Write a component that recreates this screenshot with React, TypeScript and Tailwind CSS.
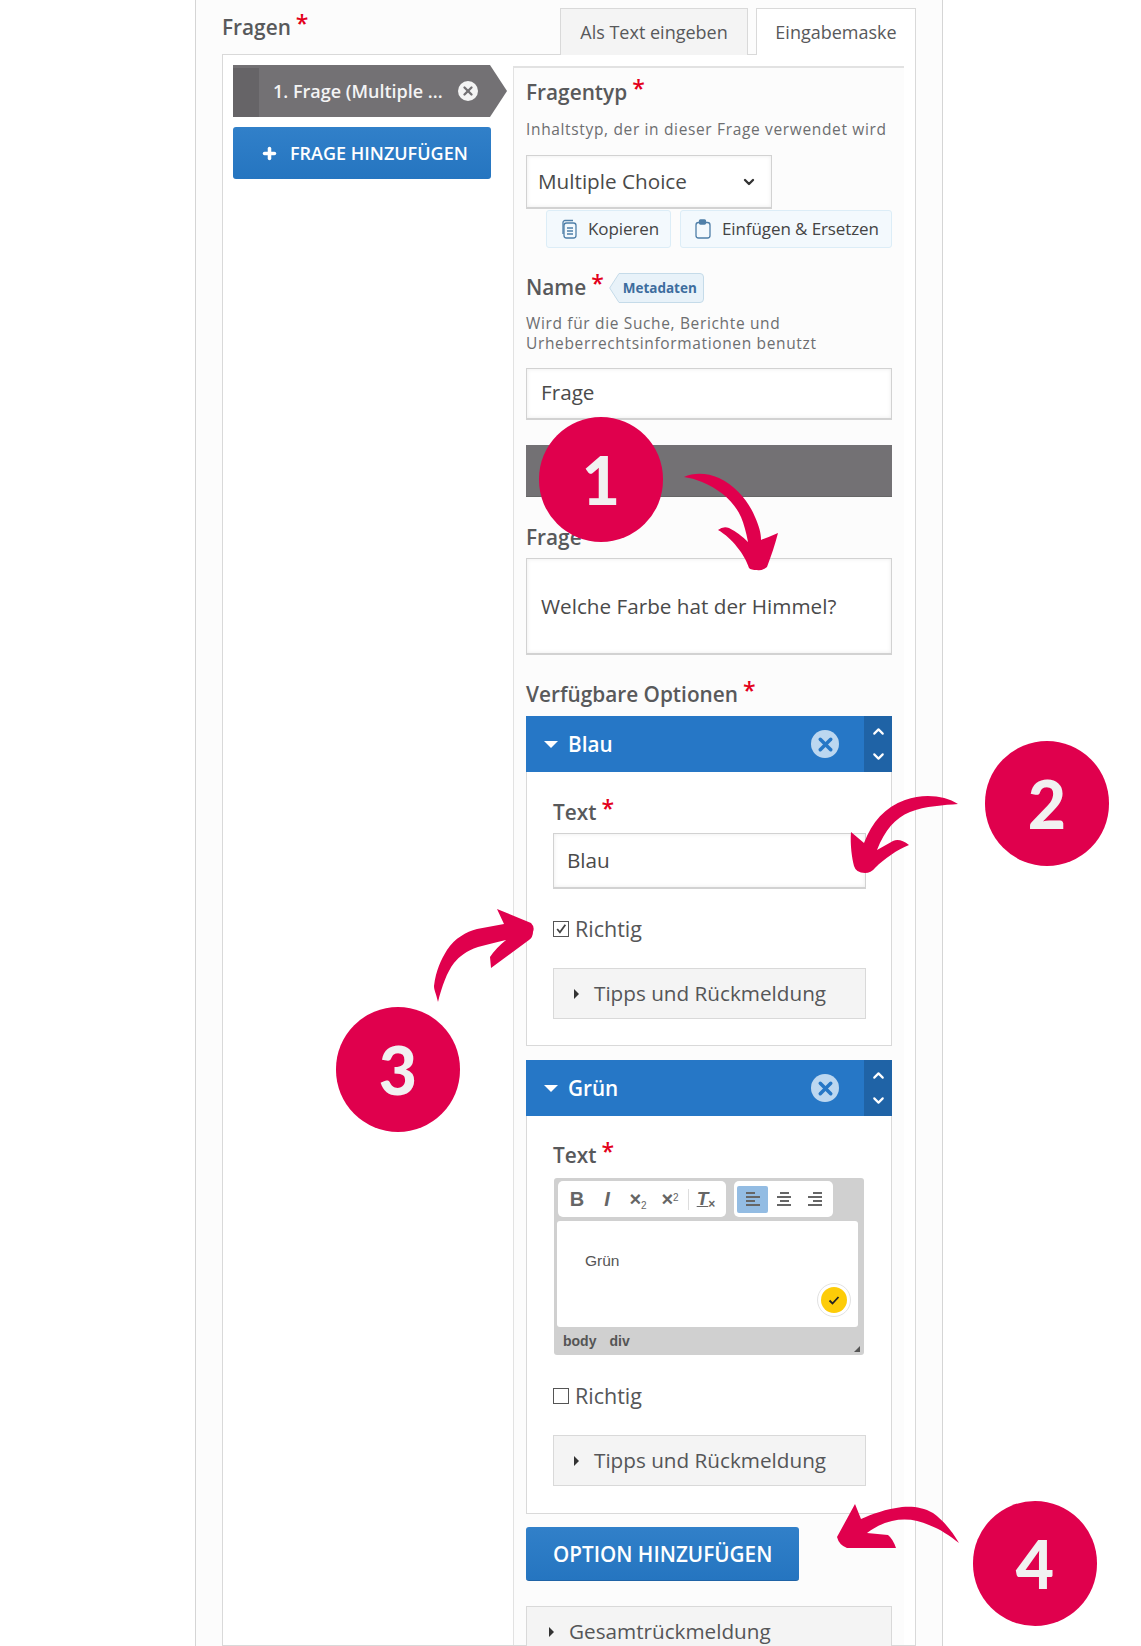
import type { ReactNode } from 'react';
import { ChevronDown, ChevronUp, Plus, X } from 'lucide-react';

function Label({ children, className = '' }: { children: ReactNode; className?: string }) {
  return (
    <div className={`flex h-[30px] items-center text-[20.8px] font-semibold text-[#58595b] ${className}`}>
      <span>{children}</span>
      <span className="relative -top-[5px] ml-[5px] text-[23px] font-semibold leading-none text-[#e3001b]">*</span>
    </div>
  );
}

function CollapsedBox({ title, className = '' }: { title: string; className?: string }) {
  return (
    <div className={`flex items-center border border-[#d9d9d9] bg-[#f4f4f4] text-[20.7px] text-[#555658] ${className}`}>
      <span className="mr-[15px] h-0 w-0 border-y-[5px] border-l-[5px] border-y-transparent border-l-[#333]" />
      {title}
    </div>
  );
}

function OptionHeader({ title }: { title: string }) {
  return (
    <div className="flex h-[56px] items-center bg-[#2677c6]">
      <span className="ml-[18px] h-0 w-0 border-x-[7px] border-t-[7px] border-x-transparent border-t-white" />
      <span className="ml-[10px] flex-1 pt-[2px] text-[20.7px] font-semibold text-white">{title}</span>
      <span className="mr-[25px] flex h-[28px] w-[28px] items-center justify-center rounded-full bg-[#bcd7f0]">
        <X size={21} strokeWidth={4} className="text-[#2677c6]" />
      </span>
      <div className="flex h-full w-[28px] flex-col items-center justify-center gap-[8px] bg-[#1f63a6]">
        <ChevronUp size={17} strokeWidth={3} className="text-white" />
        <ChevronDown size={17} strokeWidth={3} className="text-white" />
      </div>
    </div>
  );
}

function Richtig({ checked, className = '' }: { checked: boolean; className?: string }) {
  return (
    <div className={`flex h-[24px] items-center text-[21.5px] text-[#555658] ${className}`}>
      <span className="flex h-[16px] w-[16px] items-center justify-center border border-[#555] bg-white">
        {checked && (
          <svg width="12" height="12" viewBox="0 0 11 11" fill="none" stroke="#444" strokeWidth="1.6">
            <path d="M2 5.5l2.5 3L9.5 1.5" />
          </svg>
        )}
      </span>
      <span className="ml-[6px]">Richtig</span>
    </div>
  );
}

function AlignIcon({ kind }: { kind: 'left' | 'center' | 'right' }) {
  const short = kind === 'left' ? 'M1 2h9M1 10h9' : kind === 'center' ? 'M4 2h9M4 10h9' : 'M6 2h9M6 10h9';
  return (
    <svg width="16" height="16" viewBox="0 0 16 16" fill="none" stroke="#666" strokeWidth="2">
      <path d={`${short}M1 6h14M1 14h14`} />
    </svg>
  );
}

function Toolbar() {
  return (
    <div className="ml-px flex gap-[8px]">
      <div className="flex h-[36px] w-[168px] items-center rounded-[5px] bg-white pl-[4px] font-['Liberation_Sans',sans-serif] text-[#666]">
        <span className="w-[30px] text-center text-[20px] font-bold">B</span>
        <span className="w-[30px] text-center text-[20px] font-bold italic">I</span>
        <span className="w-[32px] text-center text-[20px] font-bold">
          ×<sub className="text-[10px] font-normal">2</sub>
        </span>
        <span className="w-[32px] text-center text-[20px] font-bold">
          ×<sup className="text-[10px] font-normal">2</sup>
        </span>
        <span className="ml-[2px] mr-[2px] h-[21px] w-px bg-[#ddd]" />
        <span className="w-[30px] text-center text-[19px] font-bold italic">
          <span className="underline">T</span>
          <sub className="text-[12px] not-italic">×</sub>
        </span>
      </div>
      <div className="flex h-[36px] w-[99px] items-center rounded-[5px] bg-white pl-[3px]">
        <span className="flex h-[27px] w-[31px] items-center justify-center rounded-[2px] bg-[#93bce3]">
          <AlignIcon kind="left" />
        </span>
        <span className="flex w-[31px] justify-center">
          <AlignIcon kind="center" />
        </span>
        <span className="flex w-[31px] justify-center">
          <AlignIcon kind="right" />
        </span>
      </div>
    </div>
  );
}

function Badge({ n, className }: { n: string; className: string }) {
  return (
    <div className={`absolute flex h-[125px] w-[124px] items-center justify-center rounded-full bg-[#e0004d] font-['Lato',sans-serif] text-[66px] font-black leading-none text-[#f1f1f1] ${className}`}>
      {n}
    </div>
  );
}

const inputClass =
  'flex items-center border border-b-2 border-[#d2d2d2] bg-white text-[20.7px] text-[#4a4a4a] shadow-[inset_0_0_4px_#ececec]';

export default function App() {
  return (
    <div className="relative h-[1646px] w-[1141px] overflow-hidden bg-white font-['Open_Sans',sans-serif]">
      <div className="ml-[195px] h-full w-[748px] border-x border-[#d5d5d5] bg-[#fcfcfc] px-[26px]">
        {/* Header with tabs */}
        <div className="flex h-[54px] justify-between">
          <div className="flex h-[54px] items-start pt-[13px]">
            <Label>Fragen</Label>
          </div>
          <div className="flex items-start gap-[8px] pt-[8px]">
            <div className="flex h-[47px] w-[188px] items-center justify-center border border-b-0 border-[#d9d9d9] bg-[#f4f4f4] text-[18px] text-[#58595b]">
              Als Text eingeben
            </div>
            <div className="relative z-10 flex h-[47px] w-[160px] items-center justify-center border border-b-0 border-[#d9d9d9] bg-white text-[18px] text-[#58595b]">
              Eingabemaske
            </div>
          </div>
        </div>

        {/* Panel */}
        <div className="flex h-[1592px] w-[694px] gap-[6px] border border-[#d9d9d9] bg-white pl-[10px]">
          <div className="w-[274px] pt-[10px]">
            <div className="flex h-[52px] items-center bg-[#737174] [clip-path:polygon(0_0,257px_0,274px_50%,257px_100%,0_100%)]">
              <span className="mt-[3px] h-[49px] w-[26px] bg-[#666467]" />
              <span className="ml-[14px] w-[175px] whitespace-nowrap text-[18px] font-semibold text-[#f4f4f4]">
                1. Frage (Multiple ...
              </span>
              <span className="ml-[10px] flex h-[20px] w-[20px] items-center justify-center rounded-full bg-[#f4f4f4]">
                <X size={14} strokeWidth={4} className="text-[#737174]" />
              </span>
            </div>
            <button className="mt-[10px] flex h-[52px] w-[258px] items-center rounded-[3px] bg-gradient-to-b from-[#3180c9] to-[#2575c0] pl-[28px] text-[18px] font-semibold text-white">
              <Plus size={17} strokeWidth={5} />
              <span className="ml-[12px]">FRAGE HINZUFÜGEN</span>
            </button>
          </div>

          <div className="mt-[11px] w-[391px] border-l border-t-2 border-[#e2e2e2] bg-[#fcfcfc] pl-[12px]">
            <div className="w-[366px]">
              <Label className="mt-[10px]">Fragentyp</Label>
              <div className="mt-[11px] h-[20px] text-[15.5px] leading-[20px] tracking-[0.65px] text-[#6d6e70]">
                Inhaltstyp, der in dieser Frage verwendet wird
              </div>
              <div className={`mt-[16px] h-[54px] w-[246px] justify-between pl-[11px] pr-[14px] ${inputClass}`}>
                Multiple Choice
                <ChevronDown size={16} strokeWidth={3.5} className="text-[#333]" />
              </div>
              <div className="ml-[20px] mt-px flex gap-[9px] text-[17px] tracking-[-0.1px] text-[#444]">
                <div className="flex h-[38px] w-[125px] items-center rounded-[3px] border border-[#dcedf7] bg-[#f3f9fd] pl-[12px]">
                  <svg width="20" height="20" viewBox="0 0 20 20" fill="none" stroke="#4f7fa8" strokeWidth="1.3">
                    <rect x="5" y="4" width="12" height="15" rx="2.5" />
                    <path d="M4 15V3.5A2 2 0 0 1 6 1.5h8M8 9h6M8 12h6M8 15h6" />
                  </svg>
                  <span className="ml-[9px]">Kopieren</span>
                </div>
                <div className="flex h-[38px] w-[212px] items-center rounded-[3px] border border-[#dcedf7] bg-[#f3f9fd] pl-[12px]">
                  <svg width="20" height="20" viewBox="0 0 20 20" fill="none" stroke="#4f7fa8" strokeWidth="1.3">
                    <rect x="3" y="3.5" width="14" height="15.5" rx="2.5" />
                    <rect x="6.5" y="1" width="6" height="4" rx="1" fill="#4f7fa8" />
                  </svg>
                  <span className="ml-[9px]">Einfügen &amp; Ersetzen</span>
                </div>
              </div>
              <div className="mt-[25px] flex items-center">
                <Label>Name</Label>
                <div className="relative ml-[5px] flex h-[30px] w-[95px] items-center justify-end pr-[7px] text-[13.5px] font-bold text-[#3d6d9e]">
                  <svg className="absolute left-0 top-0" width="95" height="30" viewBox="0 0 95 30">
                    <path d="M10 .5H91a3.5 3.5 0 0 1 3.5 3.5v22a3.5 3.5 0 0 1-3.5 3.5H10L.7 15z" fill="#e8f2f9" stroke="#c5dbe9" />
                  </svg>
                  <span className="relative">Metadaten</span>
                </div>
              </div>
              <div className="mt-[10px] text-[15.5px] leading-[20px] tracking-[0.65px] text-[#6d6e70]">
                Wird für die Suche, Berichte und
                <br />
                Urheberrechtsinformationen benutzt
              </div>
              <div className={`mt-[15px] h-[52px] pb-[2px] pl-[14px] ${inputClass}`}>Frage</div>
              <div className="mt-[25px] h-[52px] border-b border-[#666] bg-[#737174]" />
              <Label className="mt-[26px]">Frage</Label>
              <div className={`mt-[5px] h-[97px] pt-px pl-[14px] ${inputClass}`}>Welche Farbe hat der Himmel?</div>
              <Label className="mt-[25px]">Verfügbare Optionen</Label>

              <div className="mt-[6px]">
                <OptionHeader title="Blau" />
                <div className="h-[274px] border-x border-b border-[#d9d9d9] bg-white pl-[26px] pr-[25px] pt-[26px]">
                  <Label>Text</Label>
                  <div className={`mt-[5px] h-[56px] pl-[13px] ${inputClass}`}>Blau</div>
                  <Richtig checked className="mt-[28px]" />
                  <CollapsedBox title="Tipps und Rückmeldung" className="mt-[27px] h-[51px] pl-[20px]" />
                </div>
              </div>

              <div className="mt-[14px]">
                <OptionHeader title="Grün" />
                <div className="h-[398px] border-x border-b border-[#d9d9d9] bg-white pl-[26px] pr-[25px] pt-[25px]">
                  <Label>Text</Label>
                  <div className="ml-px mt-[7px] h-[177px] w-[310px] rounded-[3px] bg-[#d0d0d0] pl-[3px] pr-[6px] pt-[3px]">
                    <Toolbar />
                    <div className="relative mt-[4px] h-[106px] rounded-[3px] bg-white pl-[28px] pt-[29px] font-['Liberation_Sans',sans-serif] text-[15.5px] leading-[22px] text-[#555]">
                      Grün
                      <span className="absolute left-[260px] top-[62px] flex h-[34px] w-[34px] items-center justify-center rounded-full border border-[#e2e2e2] bg-white">
                        <span className="flex h-[26px] w-[26px] items-center justify-center rounded-full bg-[#fdcc08]">
                          <svg width="12" height="12" viewBox="0 0 12 12" fill="none" stroke="#222" strokeWidth="1.8">
                            <path d="M1.5 6.5l3 3 6-6.5" />
                          </svg>
                        </span>
                      </span>
                    </div>
                    <div className="relative flex h-[28px] items-center gap-[13px] pl-[6px] font-['Liberation_Sans',sans-serif] text-[14px] font-bold text-[#555]">
                      <span>body</span>
                      <span>div</span>
                      <span className="absolute bottom-[3px] right-[-2px] h-0 w-0 border-b-[6px] border-l-[6px] border-b-[#555] border-l-transparent" />
                    </div>
                  </div>
                  <Richtig checked={false} className="mt-[29px]" />
                  <CollapsedBox title="Tipps und Rückmeldung" className="mt-[27px] h-[51px] pl-[20px]" />
                </div>
              </div>

              <button className="mt-[13px] flex h-[54px] w-[273px] items-center rounded-[3px] border-b border-[#1f63a6] bg-gradient-to-b from-[#3180c9] to-[#2575c0] pl-[27px] pt-[2px] text-[20.7px] font-semibold text-white">
                OPTION HINZUFÜGEN
              </button>
              <CollapsedBox title="Gesamtrückmeldung" className="mt-[25px] h-[52px] pl-[22px]" />
            </div>
          </div>
        </div>
      </div>

      {/* Annotation overlay */}
      <svg className="absolute left-0 top-0" width="1141" height="1646" viewBox="0 0 1141 1646" fill="#e0004d">
        <path transform="translate(-2 0)" d="M686 477C696 472 710 473 721 478C738 486 751 502 757 517C761 526 763 533 763 540Q771 537 780 533C777 545 773 556 769 567Q764 571 759 570Q753 570 751 568C747 555 734 538 720 530Q725 526 731 528Q741 533 750 542C748 532 746 524 743 517C737 503 722 489 704 482Q695 478 686 477Z" />
        <path d="M958 804C945 796 925 793 905 800C885 807 872 822 864 843L851 832C850 845 852 858 854 866Q856 873 865 873Q871 873 875 868C885 858 897 850 909 845Q900 838 893 841L877 850C885 830 895 818 910 812C925 806 945 805 958 804Z" />
        <path d="M438 1002C436 993 434 990 434 986C436 970 441 960 447 950C455 938 466 932 477 929L504 924L497 909L531 923Q535 927 533 932Q533 937 529 940L491 968L490 957Q496 948 506 940C496 942 487 945 478 947C466 951 460 956 454 963C447 972 442 986 438 1002Z" />
        <path transform="translate(0 -3)" d="M959 1546C952 1534 943 1523 933 1516C923 1510 912 1509 902 1510C886 1512 872 1517 861 1522L855 1507L837 1540Q839 1548 847 1551L896 1551Q893 1542 888 1538L867 1536C875 1530 883 1526 892 1524C905 1521 918 1523 929 1528C940 1532 950 1539 959 1546Z" />
      </svg>
      <Badge n="1" className="left-[539px] top-[417px]" />
      <Badge n="2" className="left-[985px] top-[741px]" />
      <Badge n="3" className="left-[336px] top-[1007px]" />
      <Badge n="4" className="left-[973px] top-[1501px]" />
    </div>
  );
}
